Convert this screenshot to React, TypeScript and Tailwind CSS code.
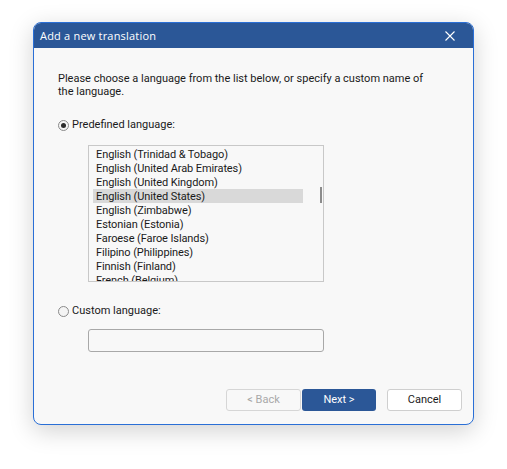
import React, { useState } from 'react';

const languages = [
  'English (Trinidad & Tobago)',
  'English (United Arab Emirates)',
  'English (United Kingdom)',
  'English (United States)',
  'English (Zimbabwe)',
  'Estonian (Estonia)',
  'Faroese (Faroe Islands)',
  'Filipino (Philippines)',
  'Finnish (Finland)',
  'French (Belgium)',
];

const Radio = ({ checked }: { checked: boolean }) => (
  <span className="w-[11px] h-[11px] rounded-full border border-[#8a8a8a] bg-[#f4f4f4] flex items-center justify-center shrink-0">
    {checked && <span className="w-[5px] h-[5px] rounded-full bg-[#2a2a2a]" />}
  </span>
);

const App = () => {
  const [selected, setSelected] = useState(3);
  const [mode, setMode] = useState<'predefined' | 'custom'>('predefined');

  return (
    <div
      className="w-[507px] h-[469px] bg-white pt-[22px] pl-[33px]"
      style={{ fontFamily: 'Roboto, "Liberation Sans", sans-serif' }}
    >
      <div className="w-[441px] h-[403px] rounded-[8px] border border-[#2a6fd6] bg-[#f8f8f8] overflow-hidden shadow-[0_6px_24px_rgba(0,0,0,0.18)] flex flex-col">
        <div className="h-[25px] bg-[#2b5797] flex items-center justify-between pl-[6px] pr-[18px] shrink-0">
          <span className="text-white text-[11px] tracking-[0.2px] mt-[1px]" style={{ fontFamily: '"Open Sans", sans-serif' }}>
            Add a new translation
          </span>
          <svg width="10" height="10" viewBox="0 0 10 10" className="mt-[1px]">
            <path d="M0.5 0.5 L9.5 9.5 M9.5 0.5 L0.5 9.5" stroke="white" strokeWidth="1.1" />
          </svg>
        </div>

        <div className="flex flex-col pl-[24px] pt-[24px] text-[11px] text-[#1a1a1a] flex-1">
          <p className="leading-[13px] w-[366px]">
            Please choose a language from the list below, or specify a custom name of the language.
          </p>

          <button
            className="flex items-center gap-[3px] mt-[20px] h-[14px] text-left"
            onClick={() => setMode('predefined')}
          >
            <Radio checked={mode === 'predefined'} />
            <span>Predefined language:</span>
          </button>

          <div className="ml-[30px] mt-[13px] w-[236px] h-[137px] border border-[#c8c8c8] bg-[#f8f8f8] relative overflow-hidden">
            <ul className="pt-[1px] pl-[4px] tracking-[-0.1px]">
              {languages.map((lang, i) => (
                <li
                  key={lang}
                  onClick={() => setSelected(i)}
                  className={
                    'h-[14px] leading-[15px] pl-[3px] w-[210px] whitespace-nowrap ' +
                    (i === selected ? 'bg-[#d9d9d9]' : '')
                  }
                >
                  {lang}
                </li>
              ))}
            </ul>
            <div className="absolute left-[231px] top-[41px] w-[2px] h-[16px] bg-[#8c8c8c]" />
          </div>

          <button
            className="flex items-center gap-[3px] mt-[22px] h-[14px] text-left"
            onClick={() => setMode('custom')}
          >
            <Radio checked={mode === 'custom'} />
            <span>Custom language:</span>
          </button>

          <input
            className="ml-[30px] mt-[11px] w-[236px] h-[23px] rounded-[3px] border border-[#a8a8a8] bg-[#f8f8f8] outline-none px-[4px] text-[11px]"
            disabled={mode !== 'custom'}
          />

          <div className="flex mt-[37px] ml-[168px] text-[11px]">
            <button className="w-[75px] h-[22px] rounded-[3px] border border-[#d6d6d6] bg-[#f8f8f8] text-[#a8a8a8]" disabled>
              &lt; Back
            </button>
            <button className="w-[74px] h-[22px] rounded-[3px] bg-[#2b5797] text-white ml-[1px]">
              Next &gt;
            </button>
            <button className="w-[75px] h-[22px] rounded-[3px] border border-[#cfcfcf] bg-white text-[#1a1a1a] ml-[11px]">
              Cancel
            </button>
          </div>
        </div>
      </div>
    </div>
  );
};

export default App;
